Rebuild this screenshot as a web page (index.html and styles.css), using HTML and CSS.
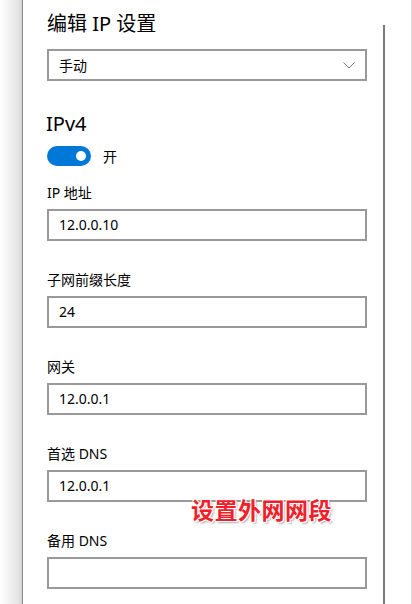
FILE: index.html
```html
<!DOCTYPE html>
<html lang="zh-CN">
<head>
  <meta charset="UTF-8">
  <title>编辑 IP 设置</title>
  <link rel="stylesheet" href="styles.css">
</head>
<body>
  <div class="shade"></div>
  <div class="panel">
    <div class="content">
      <h1 class="title">编辑 IP 设置</h1>
      <div class="select">
        <span>手动</span>
        <svg width="12" height="7" viewBox="0 0 12 7"><path d="M0.5 0.5 L6 6 L11.5 0.5" fill="none" stroke="#7a7a7a" stroke-width="1"/></svg>
      </div>

      <h2 class="section">IPv4</h2>
      <div class="toggle-row">
        <span class="toggle"><span class="knob"></span></span>
        <span>开</span>
      </div>

      <div class="field">
        <label>IP 地址</label>
        <div class="input">12.0.0.10</div>
      </div>
      <div class="field">
        <label>子网前缀长度</label>
        <div class="input">24</div>
      </div>
      <div class="field">
        <label>网关</label>
        <div class="input">12.0.0.1</div>
      </div>
      <div class="field">
        <label>首选 DNS</label>
        <div class="input">12.0.0.1</div>
      </div>
      <div class="field">
        <label>备用 DNS</label>
        <div class="input"></div>
      </div>
    </div>
    <div class="scrollbar"></div>
    <div class="note">设置外网网段</div>
  </div>
</body>
</html>
```

FILE: styles.css
```css
body {
  margin: 0;
  width: 412px;
  height: 604px;
  overflow: hidden;
  display: flex;
  background: #fff;
  font-family: "Noto Sans", "Noto Sans CJK SC", sans-serif;
  color: #000;
}
.shade {
  width: 22px;
  background: linear-gradient(to right, #ffffff, #e4e4e4 85%, #d2d2d2);
}
.panel {
  flex: 1;
  position: relative;
  border-left: 1px solid #8c8c8c;
  border-right: 1px solid #dcdcdc;
  padding: 10px 0 0 24px;
}
.content {
  width: 320px;
}
.title {
  font-size: 20px;
  font-weight: normal;
  line-height: 28px;
  margin: 0;
}
.select {
  margin-top: 11px;
  height: 28px;
  border: 2px solid #999;
  display: flex;
  align-items: center;
  justify-content: space-between;
  padding: 0 10px 0 10px;
  font-size: 14px;
}
.section {
  font-size: 20px;
  font-weight: normal;
  line-height: 28px;
  margin: 29px 0 0 -1px;
}
.toggle-row {
  margin-top: 8px;
  height: 20px;
  display: flex;
  align-items: center;
  gap: 12px;
  font-size: 14px;
}
.toggle {
  width: 44px;
  height: 20px;
  border-radius: 10px;
  background: #0078d7;
  position: relative;
}
.knob {
  position: absolute;
  right: 5px;
  top: 5px;
  width: 10px;
  height: 10px;
  border-radius: 50%;
  background: #fff;
}
.field {
  margin-top: 17px;
}
.field + .field {
  margin-top: 29px;
}
.field label {
  display: block;
  font-size: 14px;
  line-height: 20px;
  margin-bottom: 6px;
}
.input {
  height: 28px;
  border: 2px solid #999;
  padding: 0 10px;
  font-size: 14px;
  line-height: 28px;
}
.scrollbar {
  position: absolute;
  left: 360px;
  top: 25px;
  bottom: 0;
  width: 2px;
  background: #7a7a7a;
}
.note {
  position: absolute;
  left: 168px;
  top: 492px;
  font-size: 23px;
  font-weight: bold;
  color: #f0202a;
  letter-spacing: 0.5px;
  text-shadow: 1px 0 0 #fff, -1px 0 0 #fff, 0 1px 0 #fff, 0 -1px 0 #fff, 1px 1px 0 #fff, -1px -1px 0 #fff, 2px 2px 2px #aaa;
}
```
